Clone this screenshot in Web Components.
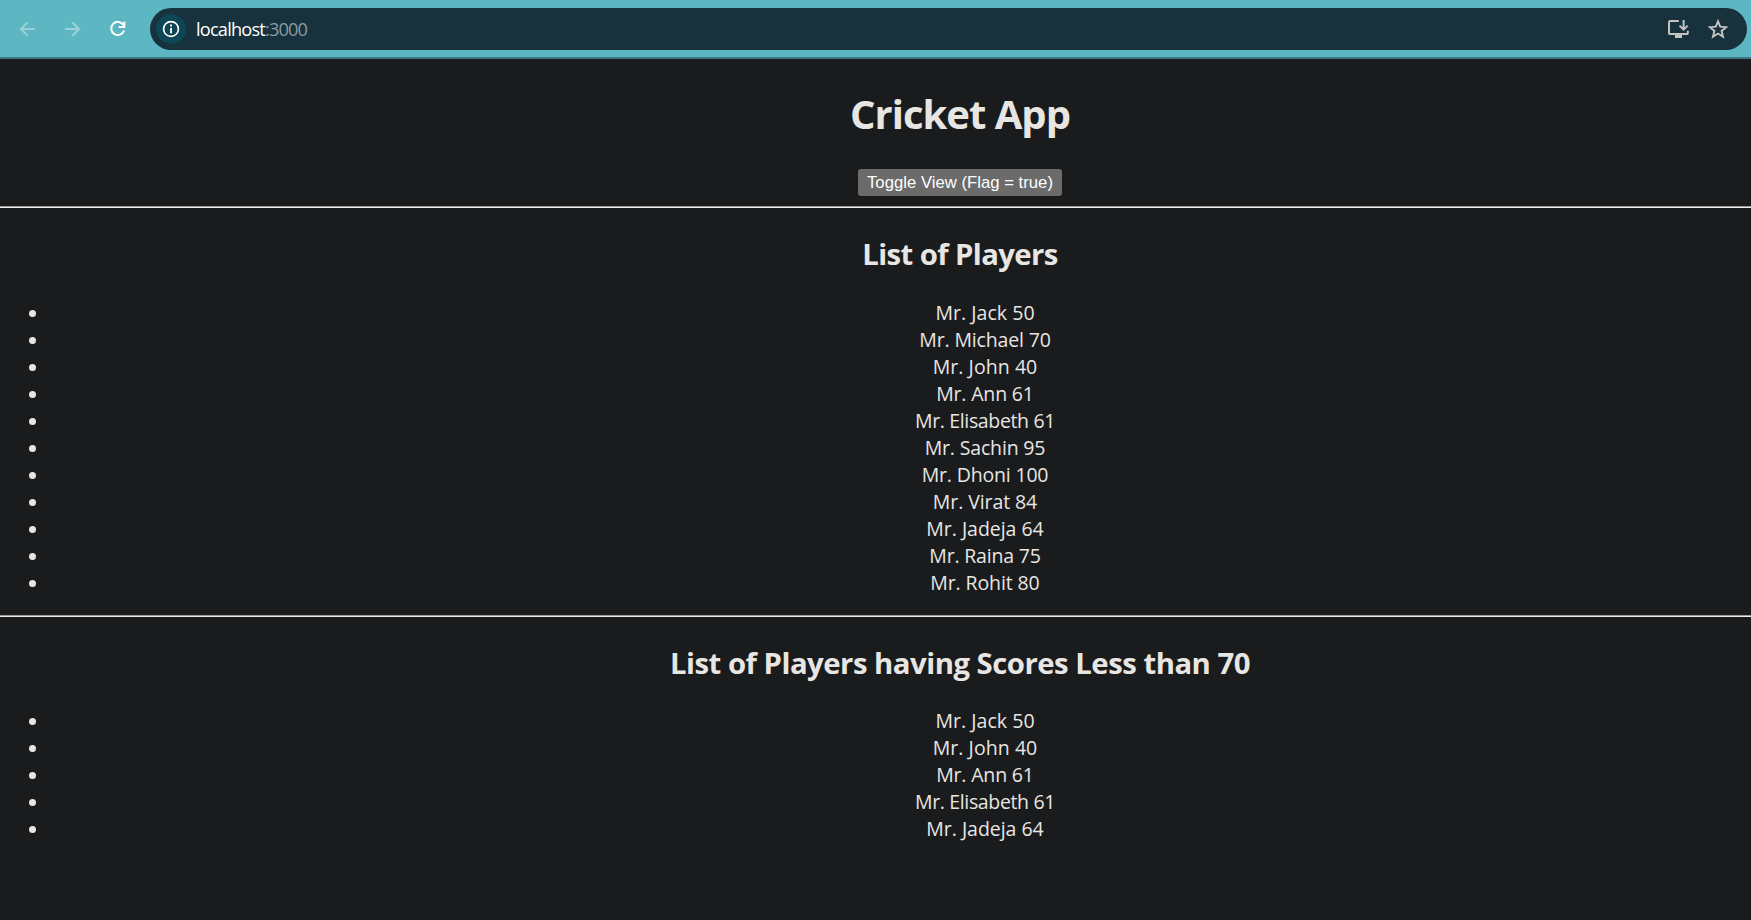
<!DOCTYPE html>
<html lang="en">
<head>
<meta charset="utf-8">
<title>Cricket App</title>
<style>
html,body{margin:0;height:100%;overflow:hidden;background:#1a1b1d}
body{font-family:"Open Sans","Noto Sans",sans-serif;color:#e8e6e3}
</style>
</head>
<body>
<browser-window><cricket-app></cricket-app></browser-window>
<script>
const define = (name, html, setup) => customElements.define(name, class extends HTMLElement {
  constructor() {
    super();
    this.attachShadow({mode: 'open'}).innerHTML = html;
  }
  connectedCallback() { if (setup) setup(this, this.shadowRoot); }
});

// A single line of text spread evenly over the width given in its "w" attribute.
define('fit-text', `<style>
  :host{display:inline-block;white-space:pre;flex:none}
  span{display:inline-block;white-space:pre}
</style><span><slot></slot></span>`, (el, root) => {
  const span = root.querySelector('span');
  const want = parseFloat(el.getAttribute('w'));
  const gap = (want - span.getBoundingClientRect().width) / el.textContent.length;
  span.style.letterSpacing = gap.toFixed(4) + 'px';
});

define('tool-bar', `<style>
  :host{display:flex;align-items:center;box-sizing:border-box;height:59px;padding:8px 4px 7px 14px;background:#5cb7c3;border-bottom:2px solid #3d7480}
  .nav{display:flex;gap:17px;flex:none;width:136px}
  .nav svg{width:28px;height:28px;flex:none}
  .box{flex:1;height:42px;border-radius:21px;background:#17323d;display:flex;align-items:center;padding:0 15px 0 6px;box-sizing:border-box}
  .info{width:30px;height:30px;border-radius:50%;background:#0d4656;flex:none}
  .url{flex:1;padding-left:10px;font-size:18.2px;line-height:26px;color:#fff;display:flex}
  .port{color:#8b9ba2}
  .act{width:28px;height:28px;margin-left:12px}
</style>
<div class="nav">
 <svg viewBox="0 0 28 28" fill="none" stroke="#9bd2da" stroke-width="2"><path d="M21 14H7.5M13.7 7.3L7 14l6.7 6.7"/></svg>
 <svg viewBox="0 0 28 28" fill="none" stroke="#9bd2da" stroke-width="2"><path d="M6 14h13.5M13.3 7.3L20 14l-6.7 6.7"/></svg>
 <svg viewBox="0 0 28 28" fill="none" stroke="#fff" stroke-width="2"><path d="M19.6 10.2A6.6 6.6 0 1 0 20.1 15.5M20.3 6.5v5.4h-5.6"/></svg>
</div>
<div class="box">
 <svg class="info" viewBox="0 0 30 30"><circle cx="15" cy="15" r="7.4" fill="none" stroke="#fff" stroke-width="1.7"/><path d="M14.1 10.6h1.9v1.9h-1.9zM14.1 14h1.9v5.2h-1.9z" fill="#fff"/></svg>
 <div class="url"><fit-text w="69">localhost</fit-text><fit-text class="port" w="42">:3000</fit-text></div>
 <svg class="act" viewBox="0 0 28 28" fill="none" stroke="#c7c3c0" stroke-width="2"><path d="M14.8 6H6.2Q5 6 5 7.2V17.9Q5 19.1 6.2 19.1H22.6Q23.8 19.1 23.8 17.9V15.7M19.6 5v9M15.5 10.6l4.1 4.1 4.1-4.1"/><path d="M11 20h7v3h-7z" fill="#c7c3c0" stroke="none"/></svg>
 <svg class="act" viewBox="0 0 28 28" fill="none" stroke="#c7c3c0" stroke-width="1.9"><path d="M14 6.3l2.2 5.4 5.9.45-4.5 3.8 1.4 5.7L14 18.5l-5 3.15 1.4-5.7-4.5-3.8 5.9-.45z"/></svg>
</div>`);

define('browser-window', `<style>
  :host{display:flex;flex-direction:column;height:100vh;overflow:hidden}
  main{flex:1;overflow:hidden;background:#1a1b1d}
</style><tool-bar></tool-bar><main><slot></slot></main>`);

define('page-rule', `<style>
  :host{display:block;height:1px;border-top:1px solid #9b9a9a;background:#f0eeee}
</style>`);

define('toggle-button', `<style>
  :host{display:block;text-align:center;height:27px}
  button{font:16.67px/21px "Liberation Sans",Arial,sans-serif;color:#fff;background:#6b6b6b;border:0;border-radius:3px;width:204px;height:27px;padding:0;vertical-align:top}
</style><button><fit-text w="186">Toggle View (Flag = true)</fit-text></button>`);

define('player-row', `<style>
  :host{display:grid;grid-template-columns:50px 1fr;height:27px;align-items:center;font-size:19.5px;line-height:27px}
  i{width:7px;height:7px;border-radius:50%;background:#e8e6e3;margin:3px 0 0 29px}
  div{text-align:center;height:27px;position:relative;top:1px}
</style><i></i><div><fit-text></fit-text></div>`);

define('player-list', `<style>
  :host{display:block}
  h2{margin:26px 0 24px;height:40px;font-size:29.3px;line-height:40px;font-weight:700;text-align:center}
  section{padding-bottom:20px}
</style><h2><slot></slot></h2><section></section>`, (el, root) => {
  if (el.hasAttribute('tight')) root.querySelector('h2').style.marginBottom = '23px';
  const section = root.querySelector('section');
  for (const [name, score, width] of el.players || []) {
    const row = document.createElement('player-row');
    const text = row.shadowRoot.querySelector('fit-text');
    text.textContent = `Mr. ${name} ${score}`;
    text.setAttribute('w', width - 1.3);
    section.append(row);
  }
});

define('cricket-app', `<style>
  :host{display:block;width:1920px}
  h1{margin:28px 0 29px;height:53px;font-size:40px;line-height:53px;font-weight:700;text-align:center}
  toggle-button{margin-bottom:10px}
</style>
<div style="display:flow-root"><h1><fit-text w="220">Cricket App</fit-text></h1>
<toggle-button></toggle-button>
<page-rule></page-rule>
<div class="lists"></div></div>`, (el, root) => {
  const players = [['Jack',50,100.5],['Michael',70,132.6],['John',40,106],['Ann',61,99],['Elisabeth',61,141.4],['Sachin',95,122],['Dhoni',100,128],['Virat',84,105.6],['Jadeja',64,118.6],['Raina',75,112.6],['Rohit',80,110.6]];
  const lists = root.querySelector('.lists');
  const add = (title, width, items, tight) => {
    const list = document.createElement('player-list');
    list.players = items;
    if (tight) list.setAttribute('tight', '');
    const head = document.createElement('fit-text');
    head.setAttribute('w', width);
    head.textContent = title;
    list.append(head);
    const part = document.createElement('div');
    part.style.display = 'flow-root';
    part.append(list);
    lists.append(part);
  };
  add('List of Players', 195.5, players);
  lists.append(document.createElement('page-rule'));
  add('List of Players having Scores Less than 70', 580, players.filter(p => p[1] < 70), true);
});
</script>
</body>
</html>
